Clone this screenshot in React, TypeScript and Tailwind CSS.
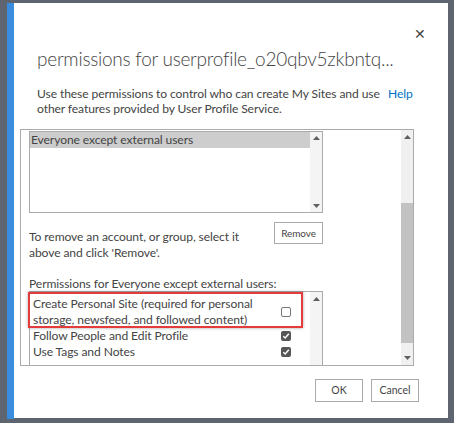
import React from "react";

const font = { fontFamily: 'Lato, "Open Sans", sans-serif' };

function Up() {
  return (
    <svg width="7" height="4" viewBox="0 0 7 4" className="block">
      <path d="M0 4 L3.5 0 L7 4 Z" fill="#5f5f5f" />
    </svg>
  );
}
function Down() {
  return (
    <svg width="7" height="4" viewBox="0 0 7 4" className="block">
      <path d="M0 0 L3.5 4 L7 0 Z" fill="#5f5f5f" />
    </svg>
  );
}

function Check({ checked }: { checked: boolean }) {
  if (!checked)
    return <div className="w-[10px] h-[10px] border border-[#777] rounded-[2px] bg-white" />;
  return (
    <div className="w-[10px] h-[10px] rounded-[2px] bg-[#575757] flex items-center justify-center">
      <svg width="8" height="8" viewBox="0 0 8 8">
        <path d="M1.3 4.2 L3.2 6 L6.8 1.8" stroke="#fff" strokeWidth="1.5" fill="none" />
      </svg>
    </div>
  );
}

export default function App() {
  return (
    <div className="w-[454px] h-[423px] bg-[#5f6570] pt-[3px] pl-[7px] pr-[6px] pb-[5px] flex" style={font}>
      <div className="w-[7px] shrink-0 bg-[#3a8dde] h-[416px]" />
      <div className="relative w-[434px] shrink-0 min-w-0 bg-white h-[415px] text-[#444] whitespace-nowrap overflow-hidden">
        <div className="absolute top-[23px] right-[22px] text-[14px] leading-[15px] text-[#444]">✕</div>
        <div className="pl-[23px] pt-[42px]">
          <div className="text-[19px] leading-[28px] font-light tracking-[-0.25px] text-[#444]">
            permissions for userprofile_o20qbv5zkbntq...
          </div>
          <div className="mt-[13px] flex text-[12.1px] leading-[15px] tracking-[-0.1px]">
            <div className="w-[351px]">
              Use these permissions to control who can create My Sites and use
              <br />
              other features provided by User Profile Service.
            </div>
            <div className="text-[#0072c6]">Help</div>
          </div>
        </div>

        <div className="ml-[6px] mt-[13px] w-[394px] h-[237px] border border-[#ababab] flex overflow-hidden">
          <div className="flex-1 pl-[8px] pt-[1px] text-[12.1px] tracking-[-0.1px]">
            <div className="w-[294px] h-[82px] border border-[#ababab] flex">
              <div className="flex-1">
                <div className="h-[16px] bg-[#cdcdcd] leading-[16px] pl-[1px]">Everyone except external users</div>
              </div>
              <div className="w-[12px] bg-[#f4f4f4] flex flex-col items-center justify-between pt-[4px] pb-[4px]">
                <Up />
                <Down />
              </div>
            </div>
            <div className="flex mt-[9px] w-[294px] justify-between">
              <div className="pt-[7px] leading-[16px]">
                To remove an account, or group, select it
                <br />
                above and click 'Remove'.
              </div>
              <div className="w-[49px] h-[22px] border border-[#ababab] text-[10px] flex items-center justify-center text-[#444]">
                Remove
              </div>
            </div>
            <div className="mt-[15px] leading-[16px]">Permissions for Everyone except external users:</div>
            <div className="relative w-[294px] h-[90px] border border-[#ababab] -mt-[1px] flex">
              <div className="flex-1 pt-[4px] pl-[3px] leading-[16px]">
                <div className="flex items-center">
                  <div className="w-[248px]">
                    Create Personal Site (required for personal
                    <br />
                    storage, newsfeed, and followed content)
                  </div>
                  <Check checked={false} />
                </div>
                <div className="flex items-center">
                  <div className="w-[248px]">Follow People and Edit Profile</div>
                  <Check checked={true} />
                </div>
                <div className="flex items-center">
                  <div className="w-[248px]">Use Tags and Notes</div>
                  <Check checked={true} />
                </div>
              </div>
              <div className="w-[12px] bg-[#f4f4f4] flex flex-col items-center pt-[5px]">
                <Up />
              </div>
              <div className="absolute left-[-2px] top-[0px] w-[275px] h-[36px] border-2 border-[#e53b3b] shadow-[0_0_3px_rgba(0,0,0,0.35)]" />
            </div>
          </div>
          <div className="w-[12px] bg-[#f0f0f0] flex flex-col items-center">
            <div className="pt-[5px] h-[73px]">
              <Up />
            </div>
            <div className="w-[12px] h-[140px] bg-[#c2c2c2]" />
            <div className="mt-[13px]">
              <Down />
            </div>
          </div>
        </div>

        <div className="flex justify-end gap-[8px] mr-[29px] mt-[13px]">
          <div className="w-[48px] h-[23px] border border-[#ababab] text-[10.5px] flex items-center justify-center text-[#444]">OK</div>
          <div className="w-[48px] h-[23px] border border-[#ababab] text-[10.5px] flex items-center justify-center text-[#444]">Cancel</div>
        </div>
      </div>
    </div>
  );
}
